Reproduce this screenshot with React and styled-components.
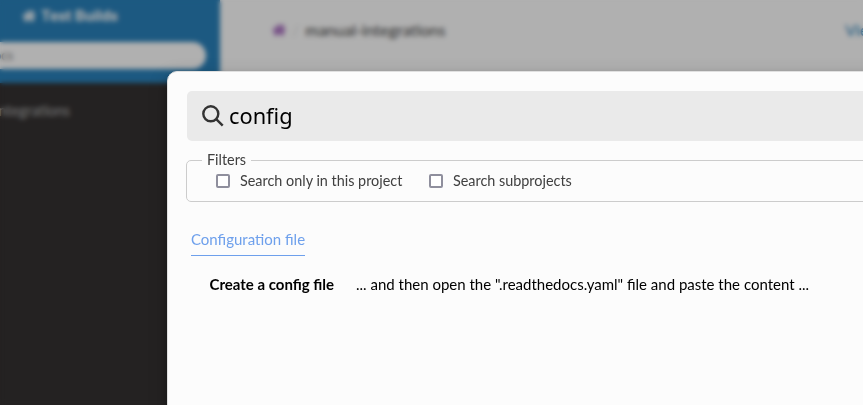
import React from "react";
import styled, { createGlobalStyle } from "styled-components";
import { FaHome } from "react-icons/fa";

const GlobalStyle = createGlobalStyle`
  *, *::before, *::after { box-sizing: border-box; }
  html, body { margin: 0; padding: 0; overflow: hidden; }
  body { background: #fcfcfc; font-family: Lato, Carlito, sans-serif; color: #404040; }
`;

const Viewport = styled.div`
  position: relative;
  width: 100%;
  height: 100vh;
  overflow: hidden;
`;

const Page = styled.div`
  display: flex;
  height: 100%;
`;

const Sidebar = styled.aside`
  flex: 0 0 300px;
  margin-left: -80px;
  background: #343131;
`;

const SidebarHeader = styled.div`
  height: 83px;
  padding-top: 5px;
  background: #2980b9;
  text-align: center;
`;

const HomeLink = styled.div`
  display: flex;
  align-items: center;
  justify-content: center;
  gap: 5px;
  height: 22px;
  color: #fcfcfc;
  font: bold 15.3px/22px Roboto, Lato, sans-serif;
`;

const DocsSearch = styled.div`
  width: 272px;
  height: 27px;
  margin: 15px 14px 0;
  padding-left: 12px;
  border-radius: 50px;
  background: #fcfcfc;
  color: #777;
  font-size: 12.8px;
  line-height: 27px;
  text-align: left;
`;

const NavItem = styled.div`
  margin-top: 18px;
  width: 150px;
  color: #b3b3b3;
  font-size: 14.4px;
  line-height: 20px;
  text-align: right;
`;

const Content = styled.main`
  flex: 1;
  display: flex;
  align-items: flex-start;
  padding: 19px 0 0 52px;
  font-size: 16px;
  line-height: 22px;
  white-space: nowrap;
`;

const HomeIcon = styled.span`
  display: flex;
  height: 22px;
  align-items: center;
  color: #9b59b6;
  font-size: 14px;
`;

const Slash = styled.span`
  margin: 0 6px;
  color: #dedede;
`;

const EditLink = styled.a`
  margin-left: auto;
  width: 18px;
  overflow: hidden;
  color: #2980b9;
`;

const Backdrop = styled.div`
  position: absolute;
  inset: 0;
  background: rgba(0, 0, 0, 0.3);
  backdrop-filter: blur(2.5px);
`;

const Dialog = styled.section`
  position: absolute;
  top: 71px;
  left: 167px;
  width: 760px;
  height: 500px;
  padding: 19px;
  border: 1px solid #e0e0e0;
  border-radius: 10px;
  background: #fcfcfc;
  box-shadow: 0 4px 8px rgba(0, 0, 0, 0.2), 0 6px 20px rgba(0, 0, 0, 0.19);
`;

const SearchBar = styled.div`
  display: flex;
  align-items: center;
  height: 50px;
  padding-left: 15px;
  border-radius: 5px;
  background: #eaeaea;
`;

const SearchIcon = styled.svg`
  width: 22px;
  height: 22px;
  fill: none;
  stroke: #333;
  stroke-width: 2.4;
`;

const Query = styled.span`
  margin-left: 5px;
  color: #000;
  font: 21.8px/30px "Noto Sans", sans-serif;
`;

const Filters = styled.fieldset`
  display: flex;
  height: 51px;
  margin: 10px 0 0 -1px;
  padding: 0 0 0 29px;
  border: 1px solid #ccc;
  border-radius: 5px;
`;

const Legend = styled.legend`
  margin-left: -14px;
  padding: 0 5px;
  font-size: 14.4px;
  line-height: 18px;
`;

const Filter = styled.label`
  display: flex;
  align-items: center;
  height: 24px;
  margin-right: 26.6px;
  font-size: 14.4px;
  line-height: 20px;
  white-space: nowrap;
`;

const Box = styled.span`
  width: 14px;
  height: 14px;
  margin-right: 10px;
  border: 2px solid #8f8f9d;
  border-radius: 2px;
  background: #fff;
`;

const Results = styled.div`
  margin: 26px 0 0 4px;
`;

const ResultTitle = styled.a`
  display: inline-block;
  height: 28px;
  border-bottom: 1px solid #6ea0ec;
  color: #6ea0ec;
  font-size: 15px;
  line-height: 22px;
`;

const ResultRow = styled.div`
  display: flex;
  margin: 17px 0 0 18.5px;
  color: #000;
  font-size: 15px;
  line-height: 22px;
  white-space: nowrap;
`;

const Section = styled.strong`
  width: 146.5px;
`;

export default function App() {
  return (
    <Viewport>
      <GlobalStyle />
      <Page>
        <Sidebar>
          <SidebarHeader>
            <HomeLink><FaHome size={14} />Test Builds</HomeLink>
            <DocsSearch>Search docs</DocsSearch>
          </SidebarHeader>
          <NavItem>manual-integrations</NavItem>
        </Sidebar>
        <Content>
          <HomeIcon><FaHome /></HomeIcon>
          <Slash>/</Slash>
          <span>manual-integrations</span>
          <EditLink>View page source</EditLink>
        </Content>
      </Page>
      <Backdrop />
      <Dialog>
        <SearchBar>
          <SearchIcon viewBox="0 0 22 22">
            <circle cx="8.8" cy="8.8" r="7.5" />
            <path d="M14.2 14.2 20.7 20.7" />
          </SearchIcon>
          <Query>config</Query>
        </SearchBar>
        <Filters>
          <Legend>Filters</Legend>
          <Filter><Box />Search only in this project</Filter>
          <Filter><Box />Search subprojects</Filter>
        </Filters>
        <Results>
          <ResultTitle>Configuration file</ResultTitle>
          <ResultRow>
            <Section>Create a config file</Section>
            <span>... and then open the ".readthedocs.yaml" file and paste the content ...</span>
          </ResultRow>
        </Results>
      </Dialog>
    </Viewport>
  );
}
